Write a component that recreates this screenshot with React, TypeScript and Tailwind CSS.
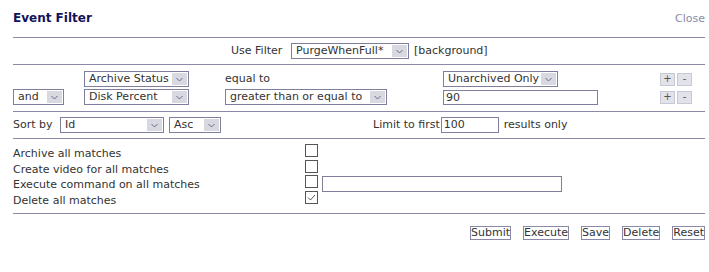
import React from "react";

// fake select box: text + grey arrow button
function Select({ value, width }: { value: string; width: string }) {
  return (
    <div className={`flex h-[16px] items-stretch border border-[#7f7f9d] bg-white ${width}`}>
      <span className="flex-1 whitespace-nowrap pl-[4px] leading-[14px]">{value}</span>
      <span className="m-px flex w-[15px] shrink-0 items-center justify-center bg-[#d8d8e0]">
        <svg width="7" height="5" viewBox="0 0 7 5">
          <path d="M0.5 1 L3.5 4 L6.5 1" fill="none" stroke="#6b6b8a" strokeWidth="1" />
        </svg>
      </span>
    </div>
  );
}

function Small({ label }: { label: string }) {
  return (
    <span className="flex h-[13px] w-[15px] items-center justify-center border border-[#c8c8d4] bg-[#e2e2ea] text-[10px] leading-none text-[#555]">
      {label}
    </span>
  );
}

function Checkbox({ checked }: { checked?: boolean }) {
  return (
    <span className="flex h-[13px] w-[13px] shrink-0 items-center justify-center border border-[#555] bg-white">
      {checked && (
        <svg width="9" height="7" viewBox="0 0 9 7">
          <path d="M1 3.5 L3.5 6 L8 1" fill="none" stroke="#555" strokeWidth="1" />
        </svg>
      )}
    </span>
  );
}

const actions = [
  { label: "Archive all matches", checked: false },
  { label: "Create video for all matches", checked: false },
  { label: "Execute command on all matches", checked: false, input: true },
  { label: "Delete all matches", checked: true },
];

export default function App() {
  return (
    <div className="h-[272px] w-[709px] bg-white pl-[13px] pr-[4px] text-[11px] text-[#333] [font-family:'DejaVu_Sans',Verdana,sans-serif]">
      <div className="flex h-[37px] items-start justify-between pt-[9px]">
        <h2 className="text-[12px] font-bold text-[#12125a]">Event Filter</h2>
        <span className="mt-[2px] text-[#8a8aa8]">Close</span>
      </div>

      <div className="flex h-[27px] items-center border-t border-[#8a8aa8] pl-[218px]">
        <span className="w-[60px]">Use Filter</span>
        <Select value="PurgeWhenFull*" width="w-[118px]" />
        <span className="ml-[5px]">[background]</span>
      </div>

      <div className="grid grid-cols-[71px_141px_218px_215px_auto] grid-rows-[16px_16px] items-center gap-y-[2px] border-t border-[#8a8aa8] pt-[6px] pb-[6px]">
        <span />
        <Select value="Archive Status" width="w-[105px]" />
        <span>equal to</span>
        <Select value="Unarchived Only" width="w-[115px]" />
        <span className="flex gap-[2px] pl-[2px]">
          <Small label="+" />
          <Small label="-" />
        </span>

        <Select value="and" width="w-[51px]" />
        <Select value="Disk Percent" width="w-[105px]" />
        <Select value="greater than or equal to" width="w-[162px]" />
        <div className="h-[15px] w-[155px] border border-[#7f7f9d] bg-white pl-[2px] leading-[13px]">90</div>
        <span className="flex gap-[2px] pl-[2px]">
          <Small label="+" />
          <Small label="-" />
        </span>
      </div>

      <div className="flex h-[27px] items-center border-t border-[#8a8aa8]">
        <span className="w-[47px]">Sort by</span>
        <Select value="Id" width="w-[104px]" />
        <span className="w-[5px]" />
        <Select value="Asc" width="w-[52px]" />
        <span className="ml-[152px]">Limit to first</span>
        <div className="ml-px h-[16px] w-[58px] border border-[#7f7f9d] bg-white pl-[2px] leading-[14px]">100</div>
        <span className="ml-[5px]">results only</span>
      </div>

      <div className="flex flex-col border-t border-[#8a8aa8] pt-[5px] pb-[6px]">
        {actions.map((a) => (
          <div key={a.label} className="flex h-[15.7px] items-start">
            <span className="w-[292px] pt-[3px] leading-[13px]">{a.label}</span>
            <Checkbox checked={a.checked} />
            {a.input && (
              <div className="ml-[4px] mt-px h-[16px] w-[240px] border border-[#7f7f9d] bg-white" />
            )}
          </div>
        ))}
      </div>

      <div className="flex justify-end gap-[12px] border-t border-[#8a8aa8] pt-[12px]">
        {["Submit", "Execute", "Save", "Delete", "Reset"].map((b) => (
          <button key={b} className="h-[14px] border border-[#8a8aa8] bg-white px-0 text-[11px] leading-[12px] text-[#333]">
            {b}
          </button>
        ))}
      </div>
    </div>
  );
}
